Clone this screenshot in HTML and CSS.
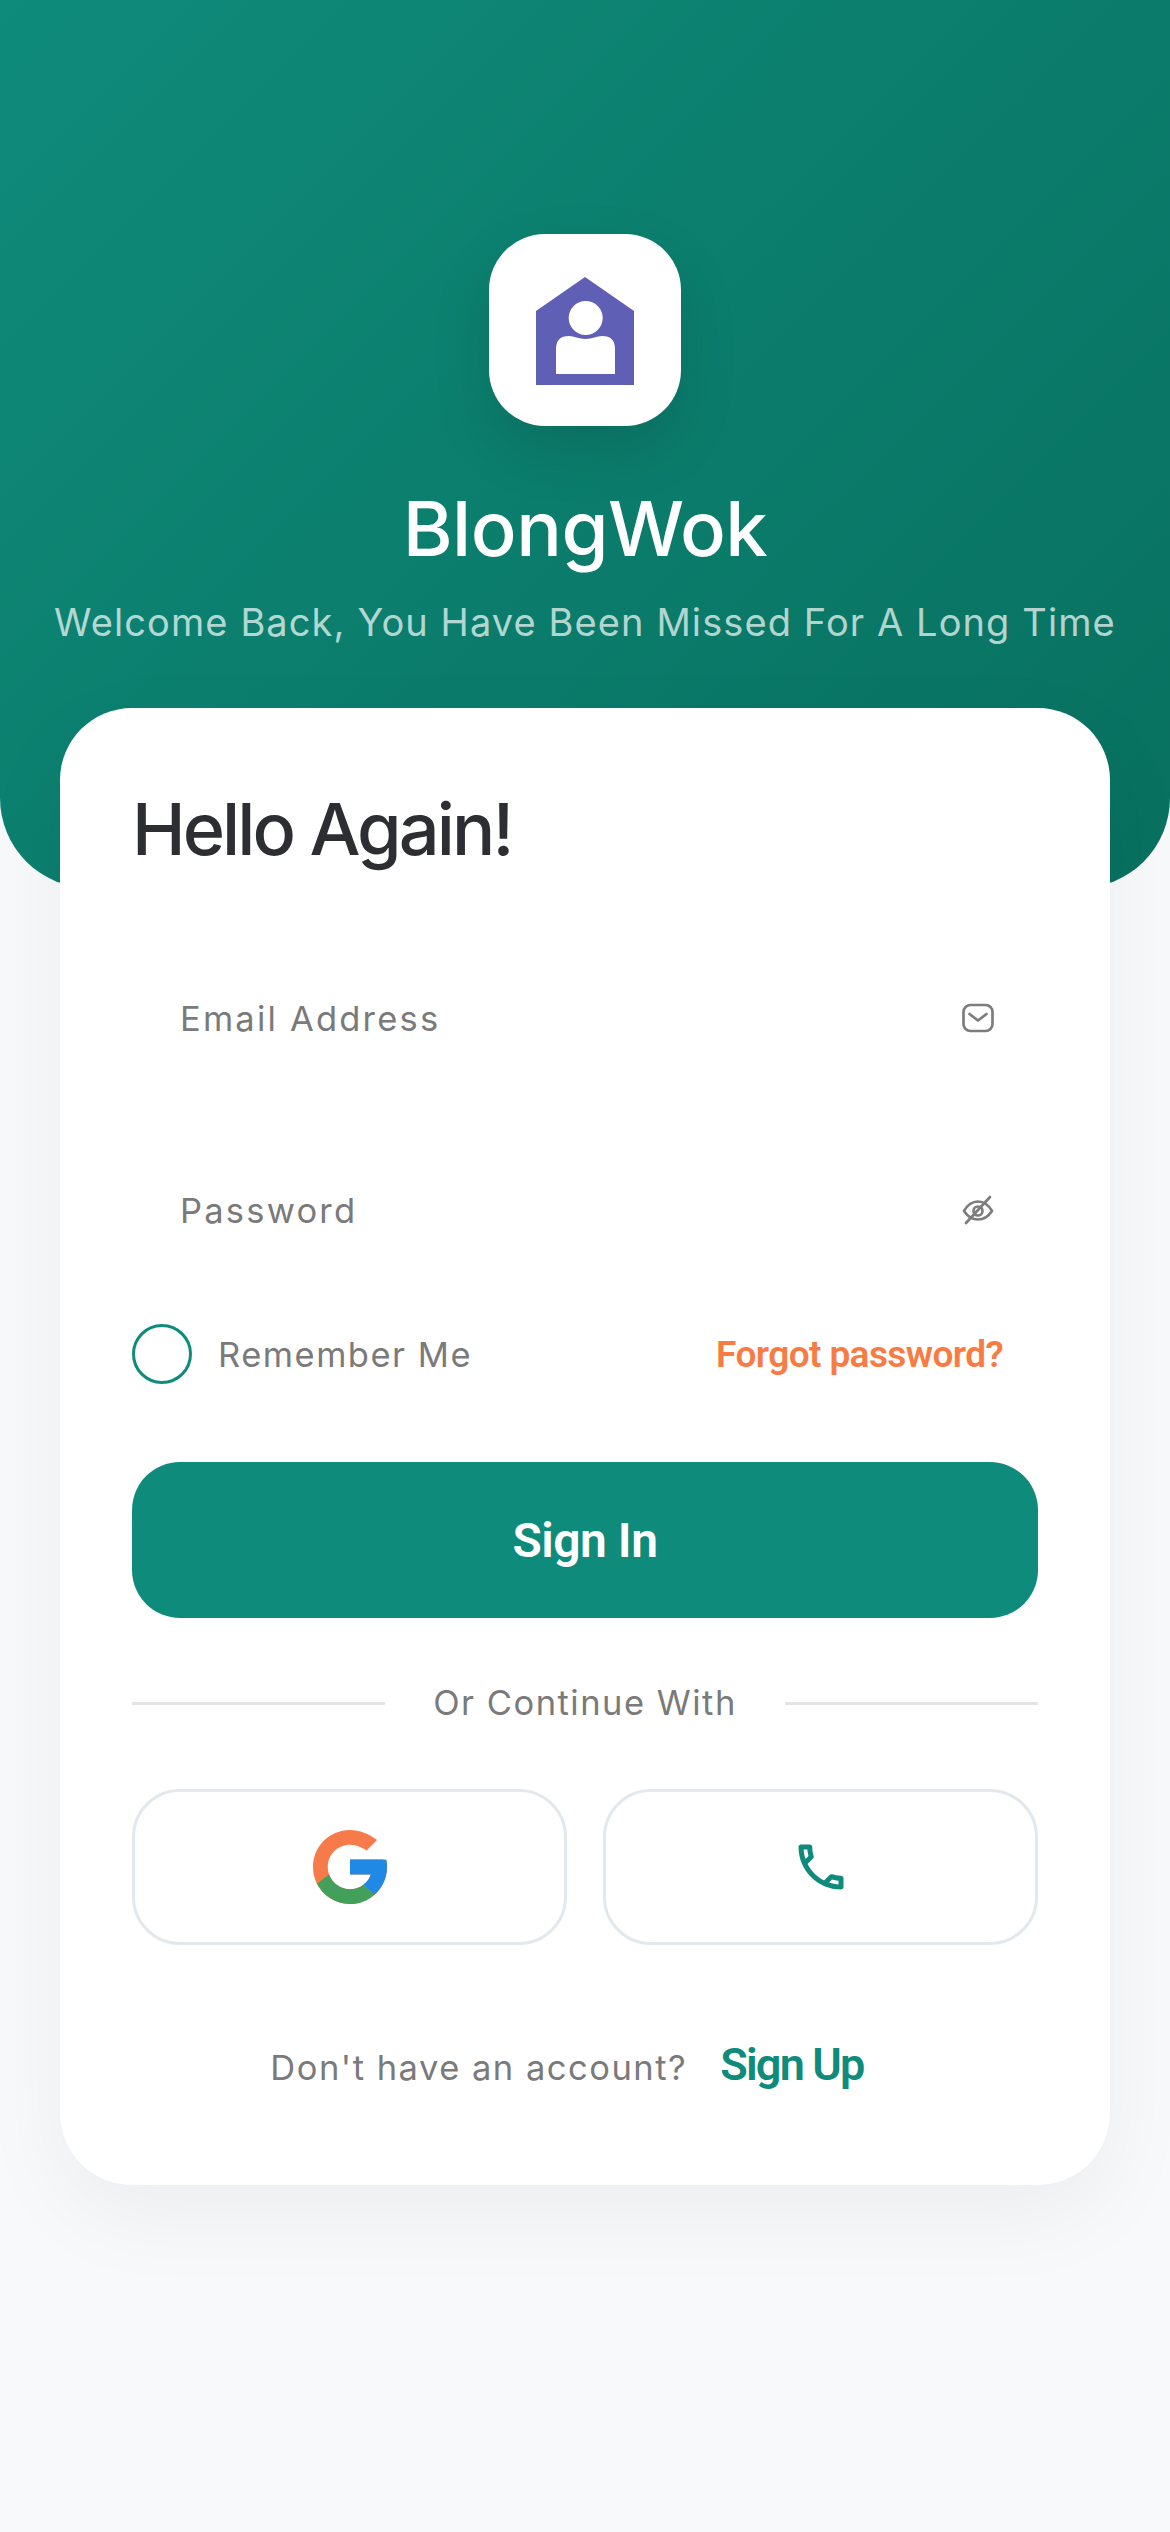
FILE: index.html
```html
<!DOCTYPE html>
<html lang="en">
<head>
  <meta charset="UTF-8" />
  <meta name="viewport" content="width=device-width, initial-scale=1" />
  <title>BlongWok - Sign In</title>
  <link rel="stylesheet" href="styles.css">
</head>
<body>

<header class="hero">
  <div class="logo-box">
    <svg class="logo" viewBox="0 0 98 108" aria-hidden="true">
      <path class="logo-house" d="M49 0 98 34V108H0V34Z" />
      <circle class="logo-person" cx="49.7" cy="41" r="17" />
      <path class="logo-person" d="M20 97V72Q20 59 33 59C38 59 43 62 49.5 62C56 62 61 59 66 59Q79 59 79 72V97Z" />
    </svg>
  </div>
  <h1>BlongWok</h1>
  <p class="tagline">Welcome Back, You Have Been Missed For A Long Time</p>
</header>

<main class="card">
  <h2>Hello Again!</h2>

  <div class="field">
    <span>Email Address</span>
    <svg class="field-icon" viewBox="0 0 36 36" aria-hidden="true">
      <rect x="3.500" y="5" width="29" height="26" rx="7" />
      <path d="M9.500 14 18 20.500 26.500 14" />
    </svg>
  </div>

  <div class="field">
    <span>Password</span>
    <svg class="field-icon" viewBox="0 0 36 36" aria-hidden="true">
      <path d="M4 19C8 12 13 9.500 18 9.500S28 12 32 19C28 25 23 27.500 18 27.500S8 25 4 19Z" />
      <circle cx="18" cy="19" r="4.500" />
      <path d="M30 5 6 31" />
    </svg>
  </div>

  <div class="options">
    <label class="remember"><i class="radio"></i>Remember Me</label>
    <a href="#" class="forgot">Forgot password?</a>
  </div>

  <button class="btn-primary">Sign In</button>

  <div class="divider"><span>Or Continue With</span></div>

  <div class="socials">
    <button class="btn-social" title="Google">
      <svg class="google" viewBox="4 4 40 40" aria-hidden="true">
        <path fill="#f77b4a" d="M43.611 20.083H42V20H24v8h11.303c-1.649 4.657-6.08 8-11.303 8-6.627 0-12-5.373-12-12s5.373-12 12-12c3.059 0 5.842 1.154 8.961 3.039l5.657-5.657C34.046 6.053 29.268 4 24 4 12.955 4 4 12.955 4 24s8.955 20 20 20 20-8.955 20-20c0-1.341-.138-2.650-.389-3.917z" />
        <path fill="#43a05a" d="M24 44c5.166 0 9.860-1.977 13.409-5.192l-6.190-5.238C29.211 35.091 26.715 36 24 36c-5.202 0-9.619-3.317-11.283-7.946l-6.522 5.025C9.505 39.556 16.227 44 24 44z" />
        <path fill="#2088e5" d="M43.611 20.083H42V20H24v8h11.303c-.792 2.237-2.231 4.166-4.087 5.571l6.190 5.238C36.971 39.205 44 34 44 24c0-1.341-.138-2.650-.389-3.917z" />
      </svg>
    </button>
    <button class="btn-social" title="Phone">
      <svg class="phone" viewBox="0 0 24 24" aria-hidden="true">
        <path d="M6.540 5c.06.89.21 1.760.45 2.590l-1.200 1.200c-.41-1.200-.67-2.470-.76-3.790h1.510m9.860 12.020c.85.24 1.720.39 2.600.45v1.490c-1.320-.09-2.590-.35-3.800-.75l1.200-1.190M7.500 3H4c-.55 0-1 .45-1 1 0 9.390 7.610 17 17 17 .55 0 1-.45 1-1v-3.490c0-.55-.45-1-1-1-1.240 0-2.450-.2-3.570-.57-.1-.04-.21-.05-.31-.05-.26 0-.51.1-.71.29l-2.200 2.200c-2.830-1.450-5.150-3.760-6.590-6.590l2.200-2.200c.28-.28.36-.67.25-1.020C8.700 6.450 8.500 5.250 8.500 4c0-.55-.45-1-1-1z" />
      </svg>
    </button>
  </div>

  <p class="signup">Don't have an account? <a href="#">Sign Up</a></p>
</main>

</body>
</html>
```

FILE: styles.css
```css
:root {
  --teal: #0f8b7b;
  --teal-dark: #08705f;
  --text: #2d2e32;
  --muted: #7a7a7a;
  --line: #e2e8ec;
  --orange: #f77b42;
  --page: #f8f9fb;
}

* {
  box-sizing: border-box;
}

body {
  margin: 0;
  min-height: 2532px;
  background-color: var(--page);
  font-family: Inter, "Noto Sans", sans-serif;
  color: var(--text);
  overflow-x: hidden;
}

/* Top green area */
.hero {
  height: 888px;
  padding-top: 234px;
  background: linear-gradient(135deg, var(--teal), var(--teal-dark));
  border-radius: 0 0 90px 90px;
  display: flex;
  flex-direction: column;
  align-items: center;
}

.logo-box {
  width: 192px;
  height: 192px;
  background-color: #fff;
  border-radius: 56px;
  box-shadow: 0 24px 60px rgba(0,0,0,0.12);
  display: flex;
  align-items: center;
  justify-content: center;
}

.logo {
  width: 98px;
  height: 108px;
  margin-top: 2px;
}

.logo-house {
  fill: #5f5fb5;
}

.logo-person {
  fill: #fff;
}

.hero h1 {
  margin: 55px 0 0;
  font-size: 76px;
  line-height: 94px;
  font-weight: 500;
  letter-spacing: -0.5px;
  color: #fff;
}

.tagline {
  margin: 22px 0 0;
  font-size: 38px;
  line-height: 50px;
  letter-spacing: 1.1px;
  color: rgba(255,255,255,0.7);
}

/* White form card */
.card {
  margin: -180px 60px 0;
  padding: 78px 72px 92px;
  background-color: #fff;
  border-radius: 72px;
  box-shadow: 0 30px 90px rgba(0,0,0,0.05);
}

.card h2 {
  margin: 0 0 68px;
  font-size: 72px;
  line-height: 86px;
  font-weight: 500;
  letter-spacing: -2.9px;
  color: var(--text);
}

.field {
  height: 156px;
  margin-bottom: 36px;
  padding: 0 42px 0 48px;
  display: flex;
  align-items: center;
  justify-content: space-between;
  font-size: 34.5px;
  letter-spacing: 2.2px;
  color: var(--muted);
}

.field-icon {
  width: 36px;
  height: 36px;
  fill: none;
  stroke: #7d7d7d;
  stroke-width: 2.7;
  stroke-linecap: round;
  stroke-linejoin: round;
}

.options {
  height: 60px;
  display: flex;
  align-items: center;
  justify-content: space-between;
}

.remember {
  display: flex;
  align-items: center;
  gap: 26px;
  font-size: 34.5px;
  letter-spacing: 1.5px;
  color: var(--muted);
}

.radio {
  width: 60px;
  height: 60px;
  border: 3px solid var(--teal);
  border-radius: 50%;
}

.forgot {
  margin-right: 35px;
  font-family: Roboto, sans-serif;
  font-size: 37px;
  font-weight: 600;
  letter-spacing: -0.6px;
  color: var(--orange);
  text-decoration: none;
}

.btn-primary {
  display: block;
  width: 100%;
  height: 156px;
  margin-top: 78px;
  border: none;
  border-radius: 48px;
  background-color: var(--teal);
  font-family: Roboto, sans-serif;
  font-size: 48px;
  font-weight: 600;
  letter-spacing: -0.5px;
  color: #fff;
}

.divider {
  height: 50px;
  margin-top: 60px;
  display: flex;
  align-items: center;
  gap: 48px;
  font-size: 34.5px;
  line-height: 50px;
  letter-spacing: 1.5px;
  color: var(--muted);
}

.divider::before,
.divider::after {
  content: "";
  flex: 1;
  height: 3px;
  background-color: #e2e4e6;
}

.socials {
  margin-top: 61px;
  display: grid;
  grid-template-columns: 1fr 1fr;
  gap: 36px;
}

.btn-social {
  height: 156px;
  padding: 0;
  background-color: #fff;
  border: 3px solid var(--line);
  border-radius: 48px;
  display: flex;
  align-items: center;
  justify-content: center;
}

.google {
  width: 74px;
  height: 74px;
}

.phone {
  width: 60px;
  height: 60px;
  fill: var(--teal);
}

.signup {
  margin: 95px 0 0;
  text-align: center;
  font-size: 34.5px;
  line-height: 50px;
  letter-spacing: 1.5px;
  color: var(--muted);
}

/* the row sits a bit left of centre in the design */
.signup a {
  margin: 0 36px 0 22px;
  font-family: Roboto, sans-serif;
  font-size: 45px;
  font-weight: 600;
  letter-spacing: -1.8px;
  color: var(--teal);
  text-decoration: none;
}
```
